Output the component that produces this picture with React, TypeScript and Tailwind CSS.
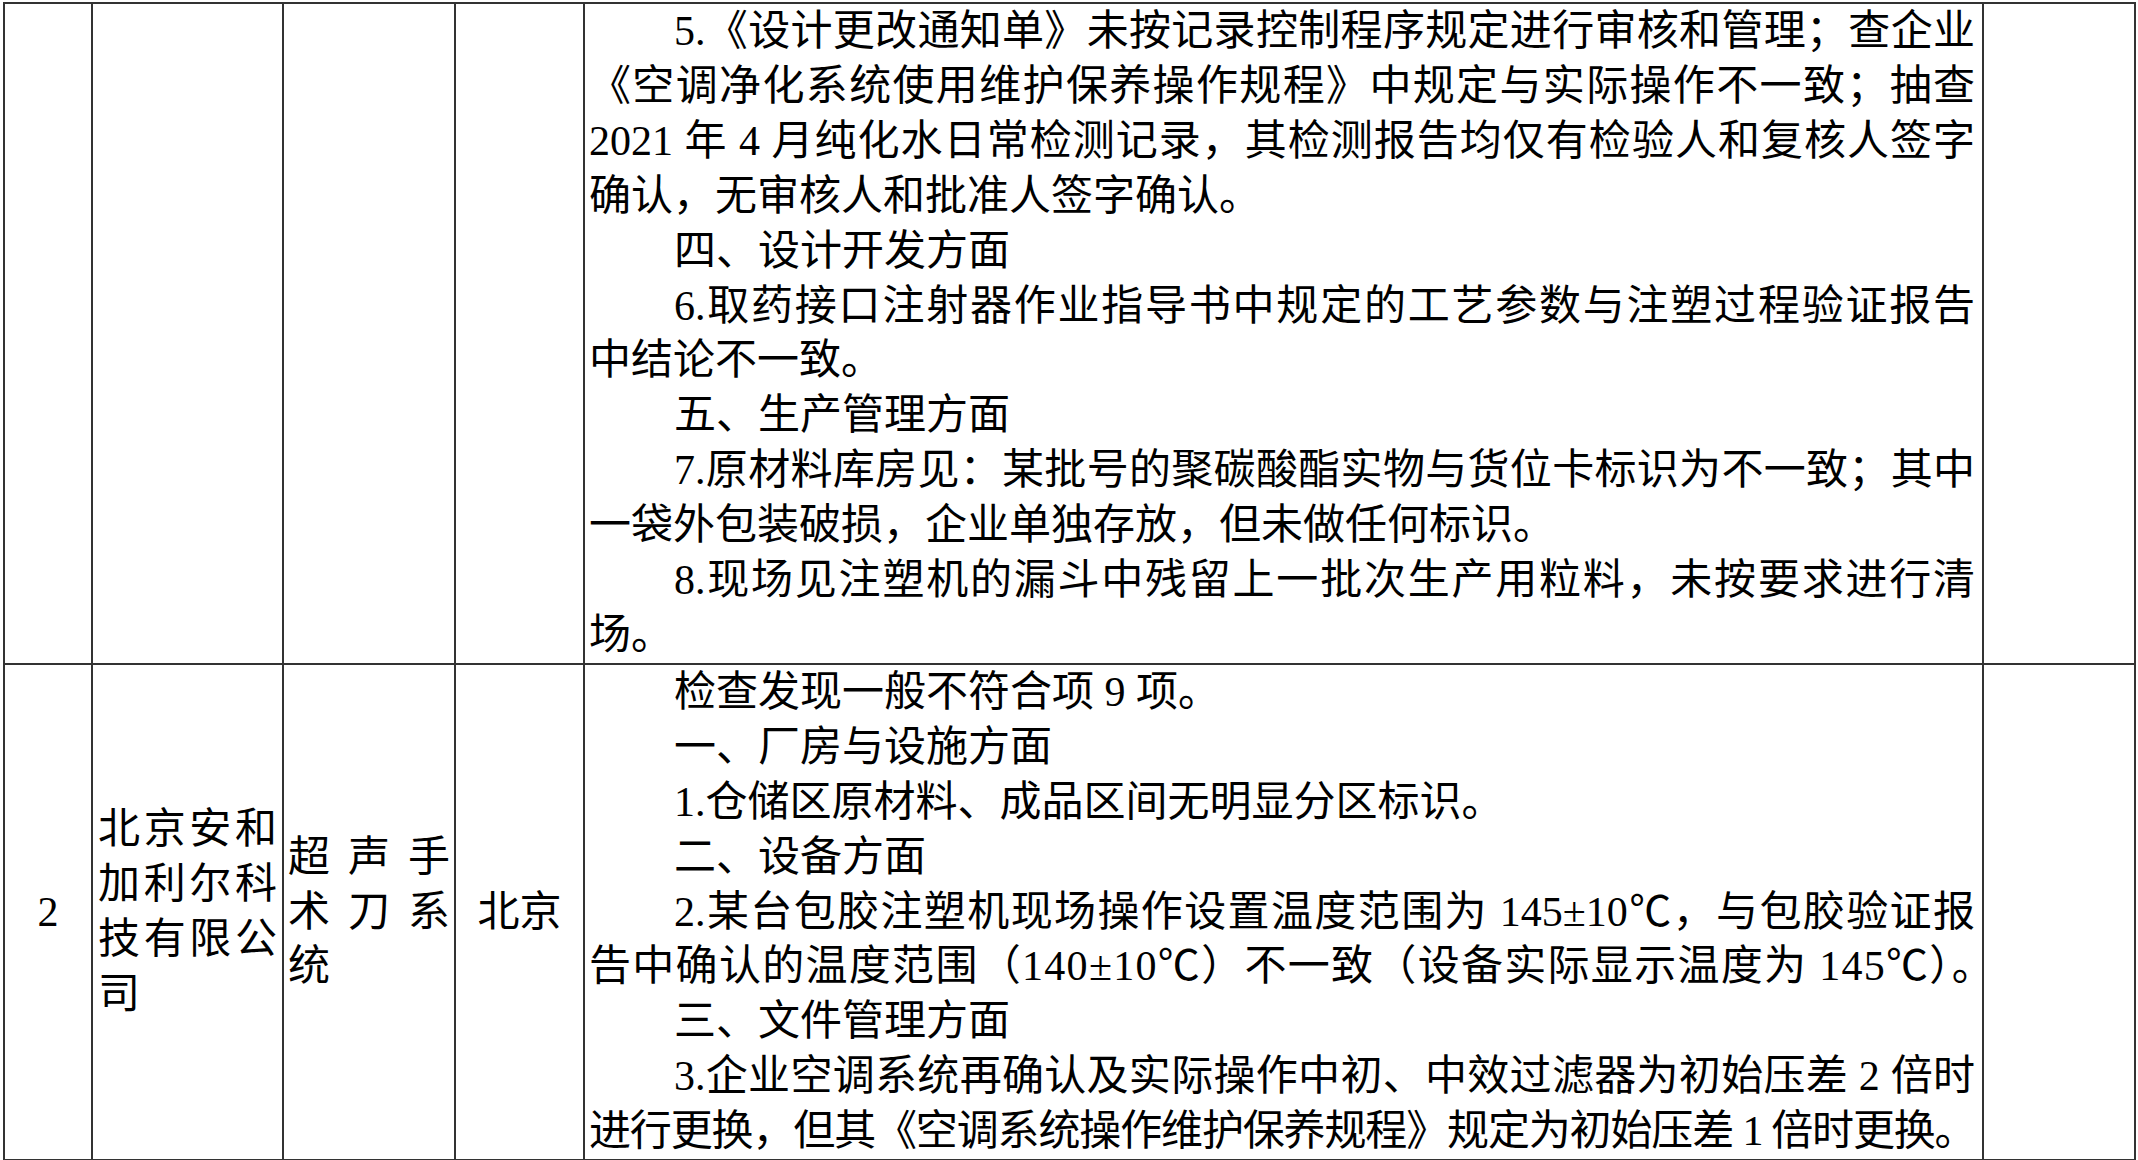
type Para = { lines: string[]; fill?: boolean; wideLast?: boolean }

const firstRow: Para[] = [
  {
    lines: [
      '5.《设计更改通知单》未按记录控制程序规定进行审核和管理；查企业',
      '《空调净化系统使用维护保养操作规程》中规定与实际操作不一致；抽查',
      '2021 年 4 月纯化水日常检测记录，其检测报告均仅有检验人和复核人签字',
      '确认，无审核人和批准人签字确认。',
    ],
  },
  { lines: ['四、设计开发方面'] },
  { lines: ['6.取药接口注射器作业指导书中规定的工艺参数与注塑过程验证报告', '中结论不一致。'] },
  { lines: ['五、生产管理方面'] },
  {
    lines: [
      '7.原材料库房见：某批号的聚碳酸酯实物与货位卡标识为不一致；其中',
      '一袋外包装破损，企业单独存放，但未做任何标识。',
    ],
  },
  { lines: ['8.现场见注塑机的漏斗中残留上一批次生产用粒料，未按要求进行清', '场。'] },
]

const secondRow: Para[] = [
  { lines: ['检查发现一般不符合项 9 项。'] },
  { lines: ['一、厂房与设施方面'] },
  { lines: ['1.仓储区原材料、成品区间无明显分区标识。'] },
  { lines: ['二、设备方面'] },
  {
    lines: [
      '2.某台包胶注塑机现场操作设置温度范围为 145±10℃，与包胶验证报',
      '告中确认的温度范围（140±10℃）不一致（设备实际显示温度为 145℃）。',
    ],
    wideLast: true,
  },
  { lines: ['三、文件管理方面'] },
  {
    lines: [
      '3.企业空调系统再确认及实际操作中初、中效过滤器为初始压差 2 倍时',
      '进行更换，但其《空调系统操作维护保养规程》规定为初始压差 1 倍时更换。',
    ],
    fill: true,
  },
]

// each printed line is its own block so the breaks land where the scan has them
function Findings({ paras }: { paras: Para[] }) {
  return (
    <div>
      {paras.map((p, pi) => (
        <div key={pi}>
          {p.lines.map((line, li) => {
            const last = li === p.lines.length - 1
            const stretch = !last || p.fill
            return (
              <div
                key={li}
                className={[
                  'whitespace-nowrap',
                  li === 0 ? 'pl-[85px]' : '',
                  stretch ? 'text-justify [text-align-last:justify]' : 'text-left',
                  last && p.fill ? 'tracking-[-1.6px]' : '',
                  last && p.wideLast ? 'tracking-[1.3px]' : '',
                ].join(' ')}
              >
                {line}
              </div>
            )
          })}
        </div>
      ))}
    </div>
  )
}

export default function App() {
  return (
    <div className="min-h-screen bg-white pl-[3px] pt-[2px] text-black font-['Liberation_Serif','Noto_Sans_CJK_SC',serif] text-[42px] leading-[54.9px]">
      <table className="w-[2131px] table-fixed border-collapse border-y-2 border-x-2 border-[#3a3a3a]">
        <colgroup>
          <col className="w-[88px]" />
          <col className="w-[191px]" />
          <col className="w-[172px]" />
          <col className="w-[129px]" />
          <col className="w-[1399px]" />
          <col className="w-[152px]" />
        </colgroup>
        <tbody>
          {/* row 1 — tail of the previous company's findings */}
          <tr>
            <td className="border-2 border-[#333] p-0"></td>
            <td className="border-2 border-[#333] p-0"></td>
            <td className="border-2 border-[#333] p-0"></td>
            <td className="border-2 border-[#333] p-0"></td>
            <td className="border-2 border-[#333] pl-[4px] pr-[7px] pt-0 pb-0 align-top">
              <Findings paras={firstRow} />
            </td>
            <td className="border-2 border-[#333] p-0"></td>
          </tr>

          {/* row 2 */}
          <tr>
            <td className="border-2 border-[#333] p-0 text-center align-middle">2</td>
            <td className="border-2 border-[#333] px-[5px] py-0 align-middle text-justify">
              北京安和加利尔科技有限公司
            </td>
            <td className="border-2 border-[#333] px-[4px] py-0 align-middle text-justify">
              超声手术刀系统
            </td>
            <td className="border-2 border-[#333] p-0 text-center align-middle">北京</td>
            <td className="border-2 border-[#333] pl-[4px] pr-[7px] pt-0 pb-0 align-top">
              <Findings paras={secondRow} />
            </td>
            <td className="border-2 border-[#333] p-0"></td>
          </tr>
        </tbody>
      </table>
    </div>
  )
}
